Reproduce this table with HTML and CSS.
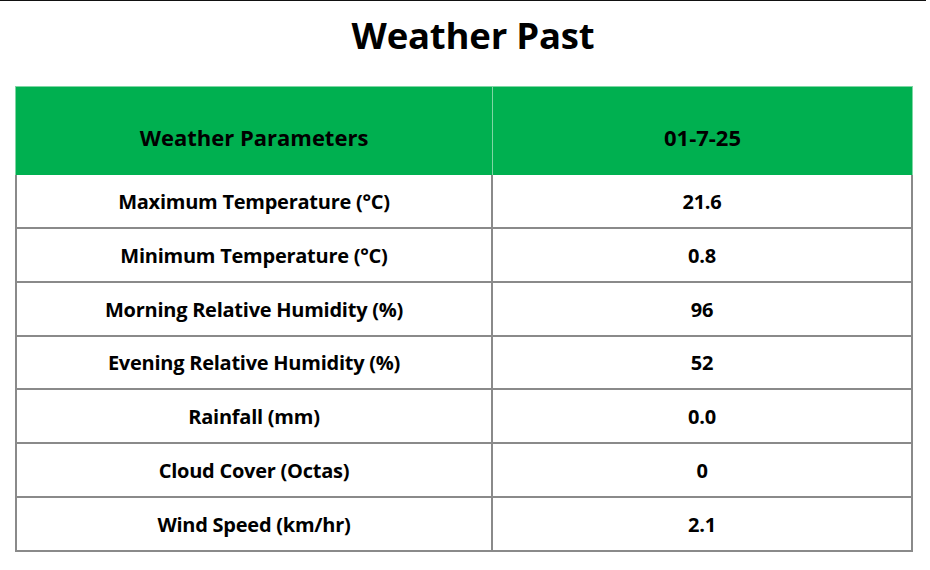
FILE: index.html
```html
<!DOCTYPE html>
<html lang="en">
<head>
<meta charset="utf-8">
<title>Weather Past</title>
<link rel="stylesheet" href="styles.css">
</head>
<body>
<div class="sheet">
  <h1 class="title">Weather Past</h1>
  <div class="grid">
    <div class="cell head first">Weather Parameters</div>
    <div class="cell head">01-7-25</div>

    <div class="cell first">Maximum Temperature (°C)</div>
    <div class="cell">21.6</div>

    <div class="cell first">Minimum Temperature (°C)</div>
    <div class="cell">0.8</div>

    <div class="cell first">Morning Relative Humidity (%)</div>
    <div class="cell">96</div>

    <div class="cell first">Evening Relative Humidity (%)</div>
    <div class="cell">52</div>

    <div class="cell first">Rainfall (mm)</div>
    <div class="cell">0.0</div>

    <div class="cell first">Cloud Cover (Octas)</div>
    <div class="cell">0</div>

    <div class="cell first">Wind Speed (km/hr)</div>
    <div class="cell">2.1</div>
  </div>
</div>
</body>
</html>
```
FILE: styles.css
```css
* { box-sizing: border-box; }
html, body { margin: 0; padding: 0; background: #fff; }
body { font-family: "Open Sans", "Noto Sans", sans-serif; color: #000; }

.sheet {
  width: 926px;
  height: 570px;
  border-top: 1px solid #111;
}

.title {
  margin: 0;
  height: 85px;
  display: flex;
  align-items: center;
  justify-content: center;
  padding-left: 20px;
  padding-bottom: 18px;
  font-size: 36.5px;
  font-weight: 700;
  letter-spacing: -0.2px;
}

.grid {
  margin-left: 15px;
  width: 898px;
  height: 466px;
  display: grid;
  grid-template-columns: 478px 420px;
  grid-template-rows: 89px repeat(7, 1fr);
}

.cell {
  display: flex;
  align-items: center;
  justify-content: center;
  padding-top: 1px;
  font-size: 20px;
  font-weight: 700;
  border-right: 2px solid #8a8a8a;
  border-bottom: 2px solid #8a8a8a;
  letter-spacing: -0.25px;
}
.cell.first { border-left: 2px solid #8a8a8a; }

.cell.head {
  background: #00b050;
  font-size: 22px;
  padding-top: 12px;
  letter-spacing: 0;
  border-top: 1px solid #7fd6a4;
  border-right: 1px solid #7fd6a4;
  border-bottom: none;
}
.cell.head.first { border-left: 1px solid #7fd6a4; }
```
